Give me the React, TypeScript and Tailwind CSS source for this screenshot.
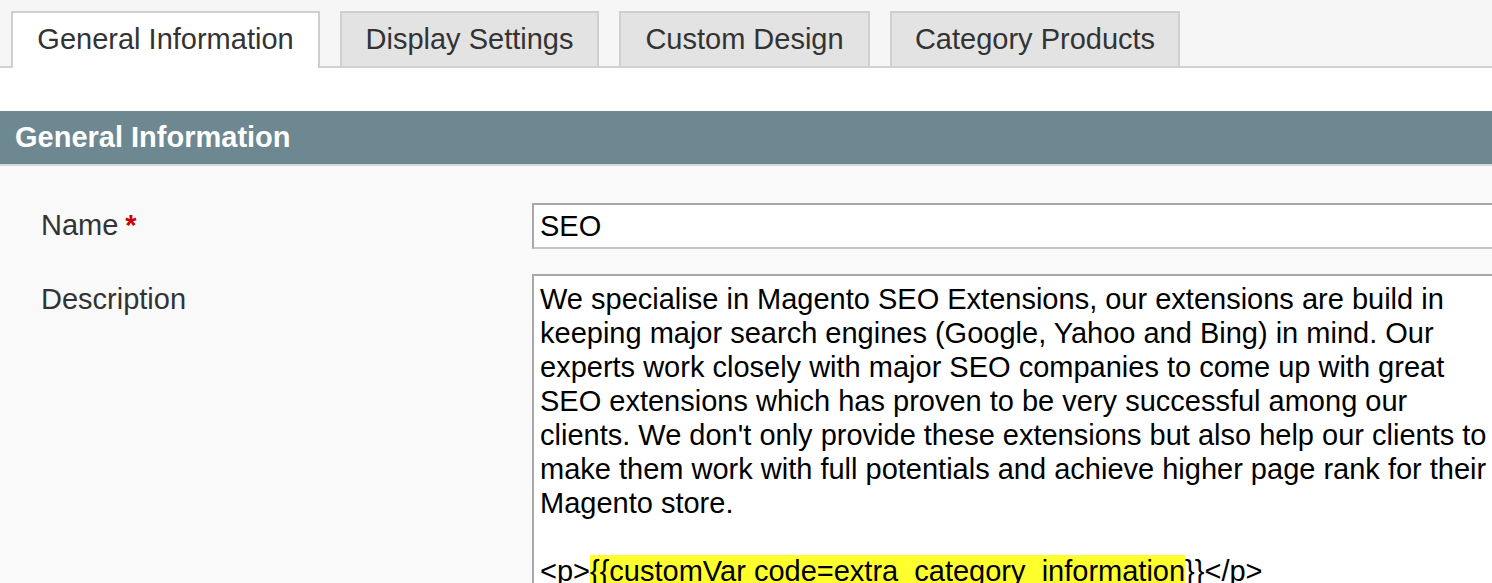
import React from "react";

const tabs = [
  { label: "General Information", w: "w-[309px]", active: true },
  { label: "Display Settings", w: "w-[259px]", active: false },
  { label: "Custom Design", w: "w-[251px]", active: false },
  { label: "Category Products", w: "w-[290px]", active: false },
];

const lines = [
  "We specialise in Magento SEO Extensions, our extensions are build in",
  "keeping major search engines (Google, Yahoo and Bing) in mind. Our",
  "experts work closely with major SEO companies to come up with great",
  "SEO extensions which has proven to be very successful among our",
  "clients. We don't only provide these extensions but also help our clients to",
  "make them work with full potentials and achieve higher page rank for their",
  "Magento store.",
];

export default function App() {
  return (
    <div className="w-[1492px] h-[583px] overflow-hidden bg-[#f9f9f9] font-['Liberation_Sans',Arial,sans-serif] text-[29px]">
      {/* tab bar */}
      <div className="flex gap-[20px] bg-[#f6f6f6] pl-[11px] pt-[11px] border-b-2 border-[#d2d2d2]">
        {tabs.map((t) =>
          t.active ? (
            <div
              key={t.label}
              className={`${t.w} h-[57px] -mb-[2px] flex items-center justify-center bg-white border-2 border-b-0 border-[#cfcfcf] text-[#333] pb-[2px]`}
            >
              {t.label}
            </div>
          ) : (
            <div
              key={t.label}
              className={`${t.w} h-[55px] flex items-center justify-center bg-[#e3e3e3] border-2 border-b-0 border-[#cfcfcf] text-[#333]`}
            >
              {t.label}
            </div>
          )
        )}
      </div>
      <div className="h-[43px] bg-white" />
      {/* section header */}
      <div className="h-[55px] bg-[#6e8891] border-b-2 border-[#d7d9da] flex items-center pl-[15px]">
        <span className="text-white font-bold leading-none">General Information</span>
      </div>
      {/* form */}
      <div className="pt-[37px] pl-[41px]">
        <div className="flex items-center">
          <div className="w-[491px] shrink-0 text-[#333]">
            Name<span className="ml-[7px] text-[#cc0000] font-bold">*</span>
          </div>
          <input
            readOnly
            value="SEO"
            className="w-[1000px] h-[46px] shrink-0 bg-white border-2 border-[#a8a8a8] border-b-[#c4c4c4] pl-[6px] text-black text-[29px] outline-none font-['Liberation_Sans',Arial,sans-serif]"
          />
        </div>
        <div className="flex mt-[25px]">
          <div className="w-[491px] shrink-0 pt-[8px] leading-[34px] text-[#333]">Description</div>
          <div className="w-[1000px] h-[400px] shrink-0 bg-white border-2 border-[#a8a8a8] pl-[6px] pt-[6px] text-black leading-[34px]">
            {lines.map((l, i) => (
              <div key={i} className="whitespace-pre">{l}</div>
            ))}
            <div className="h-[34px]" />
            <div className="whitespace-pre">
              {"<p>"}
              <span className="bg-[#ffff2e]">{"{{customVar code=extra_category_information"}</span>
              {"}}</p>"}
            </div>
          </div>
        </div>
      </div>
    </div>
  );
}
